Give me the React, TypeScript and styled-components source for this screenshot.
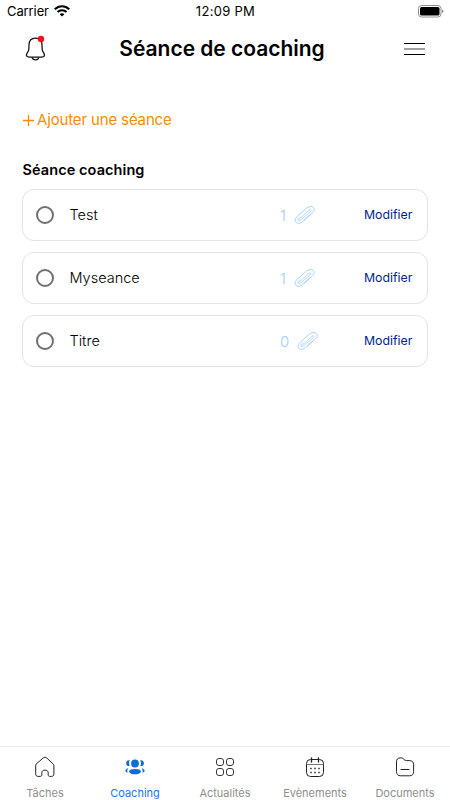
import React from "react";
import styled, { createGlobalStyle } from "styled-components";

const GlobalStyle = createGlobalStyle`
  * { box-sizing: border-box; }
  body { margin: 0; background: #fff; }
`;

const Screen = styled.div`
  width: 450px;
  height: 800px;
  display: flex;
  flex-direction: column;
  background: #fff;
  color: #000;
  font-family: Inter, "Liberation Sans", sans-serif;
  overflow: hidden;
`;

const StatusBar = styled.div`
  height: 22px;
  padding: 0 6px 0 7px;
  display: grid;
  grid-template-columns: 1fr auto 1fr;
  align-items: center;
  font-size: 13px;
  line-height: 22px;
`;

const Carrier = styled.div`
  display: flex;
  align-items: center;
  gap: 5px;
  font-size: 13px;
  letter-spacing: -0.1px;
`;

const Clock = styled.div`
  letter-spacing: 0.3px;
`;

const Battery = styled.div`
  display: flex;
  justify-content: flex-end;
`;

const Header = styled.header`
  height: 54px;
  padding: 0 25px 0 25px;
  display: grid;
  grid-template-columns: 1fr auto 1fr;
  align-items: center;
`;

const Title = styled.h1`
  margin: 0;
  font-size: 21px;
  line-height: 28px;
  font-weight: 600;
  letter-spacing: -0.03px;
  transform: translateX(-3px);
`;

const IconButton = styled.button<{ $end?: boolean }>`
  justify-self: ${(p) => (p.$end ? "end" : "start")};
  display: flex;
  padding: 0;
  margin: ${(p) => (p.$end ? "0 0 2px" : "0")};
  border: 0;
  background: none;
`;

const Content = styled.main`
  flex: 1;
  padding: 32px 22px 0;
`;

const AddButton = styled.button`
  display: flex;
  align-items: center;
  gap: 3px;
  height: 24px;
  padding: 0 0 0 1px;
  border: 0;
  background: none;
  color: #fb8c00;
  font: 400 15px/24px Inter, "Liberation Sans", sans-serif;
  letter-spacing: -0.15px;
`;

const SectionTitle = styled.h2`
  margin: 28px 0 9px;
  padding-left: 0.5px;
  font-size: 14.5px;
  line-height: 20px;
  font-weight: 600;
  letter-spacing: 0.08px;
`;

const List = styled.div`
  display: flex;
  flex-direction: column;
  gap: 11px;
`;

const Row = styled.div`
  height: 52px;
  border: 1px solid #e3e3e3;
  border-radius: 12px;
  display: grid;
  grid-template-columns: 46.5px 210.5px 84px 1fr;
  align-items: center;
`;

const Radio = styled.span`
  width: 18px;
  height: 18px;
  margin-left: 13px;
  border: 2px solid #707070;
  border-radius: 50%;
`;

const Name = styled.span`
  font-size: 14.5px;
  line-height: 20px;
  font-weight: 300;
`;

const Files = styled.span`
  display: flex;
  align-items: center;
  gap: 8px;
  color: #9fcdfb;
  font-size: 15px;
  font-weight: 300;
`;

const Edit = styled.a`
  color: #001f8c;
  font-size: 12.3px;
  line-height: 18px;
`;

const TabBar = styled.nav`
  height: 54px;
  border-top: 1px solid #ececec;
  display: grid;
  grid-template-columns: repeat(5, 1fr);
`;

const Tab = styled.div<{ $active?: boolean }>`
  display: flex;
  flex-direction: column;
  align-items: center;
  padding-top: 8px;
  gap: 7px;
  font-size: 11px;
  line-height: 16px;
  color: ${(p) => (p.$active ? "#1877f2" : "#8e8e8e")};
`;

const WifiIcon = () => (
  <svg width="16" height="12" viewBox="0 0 16 12" fill="none" stroke="#000">
    <path d="M.8 4.3C4.8.2 11.2.2 15.2 4.3" strokeWidth="2.2" />
    <path d="M3.5 7C6 4.5 10 4.5 12.5 7" strokeWidth="2" />
    <path d="M8 11.6 5.6 9.2C7 7.9 9 7.9 10.4 9.2Z" fill="#000" stroke="none" />
  </svg>
);

const BatteryIcon = () => (
  <svg width="26" height="13" viewBox="0 0 26 13">
    <rect x=".5" y=".5" width="22.5" height="11.5" rx="3" fill="#fff" stroke="#909090" />
    <rect x="2" y="2" width="19.5" height="8.5" rx="1.5" />
    <path d="M24.3 4.5c1.4.6 1.4 3 0 3.6Z" fill="#555" />
  </svg>
);

const BellIcon = () => (
  <svg width="22" height="28" viewBox="0 0 22 28" fill="none" stroke="#111" strokeWidth="1.25" strokeLinejoin="round">
    <path d="M10.5 3.2C6.5 3.2 4.1 6 4 10L3.8 14.5C3.7 16.8 1.3 18 1.4 20.3C1.5 22 3.2 22.1 5 22.1H16C17.8 22.1 19.4 22 19.5 20.3C19.6 18 17.3 16.8 17.2 14.5L17 10C16.9 6 14.5 3.2 10.5 3.2Z" />
    <path d="M7.2 22.3C7.7 25.6 13.3 25.6 13.8 22.3" />
    <circle cx="16" cy="4" r="3.2" fill="#fb1018" stroke="none" />
  </svg>
);

const MenuIcon = () => (
  <svg width="21" height="13" viewBox="0 0 21 13">
    <path d="M0 1.5H21M0 12.5H21" stroke="#000" />
    <path d="M0 7H21" stroke="#444" />
  </svg>
);

const PlusIcon = () => (
  <svg width="11" height="11" viewBox="0 0 11 11" stroke="#fb8c00" strokeWidth="1.3">
    <path d="M5.5 0V11M0 5.5H11" />
  </svg>
);

const ClipIcon = () => (
  <svg width="22" height="18" viewBox="0 0 22 18" fill="none" stroke="#9fcdfb" strokeWidth="0.9" strokeLinecap="round" strokeLinejoin="round">
    <path d="M16.8 8.2 9.6 14.7C6.4 17.5 3.6 18 2 16.3C.4 14.5 1.2 12.1 3.8 9.7L11.6 2.8C14.7.2 17.8-.1 19.4 1.6C21 3.4 20 5.6 17.7 7.6L10.2 14.2" />
    <path d="M15.1 4.3 8.2 10.4 4.8 13.4M15.1 4.3C16.7 2.9 17.7 4.2 16.4 5.5L8.1 12.9C6.3 14.4 4.5 15 3.9 14.2C3.3 13.5 4.2 12.1 5.7 10.8" strokeWidth="0.75" />
  </svg>
);

const HomeIcon = () => (
  <svg width="22" height="23" viewBox="0 0 22 23" fill="none" stroke="#222" strokeWidth="1" strokeLinejoin="round">
    <path d="M2.2 9 9.2 3C10.5 2 11.5 2 12.8 3L19.2 9C19.7 9.5 19.9 10 19.9 10.8V18.8C19.9 20.6 19 21.4 17.4 21.4H15.8C14.7 21.4 14.2 20.8 14.2 19.8V17.8C14.2 16 13 15.1 11 15.1S7.8 16 7.8 17.8V19.8C7.8 20.8 7.3 21.4 6.2 21.4H4.2C2.5 21.4 1.7 20.6 1.7 18.8V10.8C1.7 10 1.8 9.5 2.2 9Z" />
  </svg>
);

const PeopleIcon = () => (
  <svg width="22" height="23" viewBox="0 0 22 23" fill="#126bd2">
    <circle cx="11" cy="8.5" r="3.9" />
    <path d="M5.8 5.3C3.3 4.8 2 6.5 2.1 8.5C2.2 10.4 3.7 11.5 5.7 11C4.8 9.3 4.8 7.1 5.8 5.3ZM16.2 5.3C18.7 4.8 20 6.5 19.9 8.5C19.8 10.4 18.3 11.5 16.3 11C17.2 9.3 17.2 7.1 16.2 5.3Z" />
    <path d="M5.2 16.5C5.2 14.9 7.4 14.1 11 14.1S16.8 14.9 16.8 16.5C16.8 18.4 14.5 19.3 11 19.3S5.2 18.4 5.2 16.5Z" />
    <path d="M4.3 13.3C2.7 13.6 1.4 14.6 1.4 15.8C1.4 16.8 2.2 17.4 3.6 17.7C3.1 16.1 3.3 14.6 4.3 13.3ZM17.7 13.3C19.3 13.6 20.6 14.6 20.6 15.8C20.6 16.8 19.8 17.4 18.4 17.7C18.9 16.1 18.7 14.6 17.7 13.3Z" />
  </svg>
);

const GridIcon = () => (
  <svg width="22" height="23" viewBox="0 0 22 23" fill="none" stroke="#333" strokeWidth="1">
    <rect x="2.5" y="3.5" width="7" height="7" rx="2.4" />
    <rect x="12.5" y="3.5" width="7" height="7" rx="2.4" />
    <rect x="2.5" y="13.5" width="7" height="7" rx="2.4" />
    <rect x="12.5" y="13.5" width="7" height="7" rx="2.4" />
  </svg>
);

const CalendarIcon = () => (
  <svg width="22" height="23" viewBox="0 0 22 23" fill="none" stroke="#222" strokeWidth="1">
    <rect x="2.5" y="4.5" width="17" height="17" rx="4" />
    <path d="M2.5 9.5H19.5" stroke="#777" />
    <path d="M7.5 2.8V7M14.5 2.8V7" strokeWidth="1.3" strokeLinecap="round" />
    <path d="M6.3 13.5H7.7M10.3 13.5H11.7M14.3 13.5H15.7M6.3 17.5H7.7M10.3 17.5H11.7M14.3 17.5H15.7" strokeWidth="1.3" />
  </svg>
);

const FolderIcon = () => (
  <svg width="22" height="23" viewBox="0 0 22 23" fill="none" stroke="#222" strokeWidth="1" strokeLinejoin="round">
    <path d="M2.5 6.7C2.5 4.2 4 2.9 6.2 2.9H7.3C9.9 2.9 9.8 5.6 12.4 5.6H15.3C18.2 5.6 19.6 7 19.6 9.8V16.5C19.6 19.4 18.2 20.8 15.3 20.8H6.8C3.9 20.8 2.5 19.4 2.5 16.5Z" />
    <path d="M7 14.5H15" strokeLinecap="round" />
  </svg>
);

const sessions = [
  { name: "Test", files: 1 },
  { name: "Myseance", files: 1 },
  { name: "Titre", files: 0 },
];

const tabs = [
  { label: "Tâches", Icon: HomeIcon },
  { label: "Coaching", Icon: PeopleIcon, active: true },
  { label: "Actualités", Icon: GridIcon },
  { label: "Evènements", Icon: CalendarIcon },
  { label: "Documents", Icon: FolderIcon },
];

export default function App() {
  return (
    <Screen>
      <GlobalStyle />
      <StatusBar>
        <Carrier>
          Carrier
          <WifiIcon />
        </Carrier>
        <Clock>12:09 PM</Clock>
        <Battery>
          <BatteryIcon />
        </Battery>
      </StatusBar>
      <Header>
        <IconButton aria-label="Notifications">
          <BellIcon />
        </IconButton>
        <Title>Séance de coaching</Title>
        <IconButton $end aria-label="Menu">
          <MenuIcon />
        </IconButton>
      </Header>
      <Content>
        <AddButton>
          <PlusIcon />
          Ajouter une séance
        </AddButton>
        <SectionTitle>Séance coaching</SectionTitle>
        <List>
          {sessions.map((s) => (
            <Row key={s.name}>
              <Radio />
              <Name>{s.name}</Name>
              <Files>
                {s.files}
                <ClipIcon />
              </Files>
              <Edit>Modifier</Edit>
            </Row>
          ))}
        </List>
      </Content>
      <TabBar>
        {tabs.map(({ label, Icon, active }) => (
          <Tab key={label} $active={active}>
            <Icon />
            {label}
          </Tab>
        ))}
      </TabBar>
    </Screen>
  );
}
